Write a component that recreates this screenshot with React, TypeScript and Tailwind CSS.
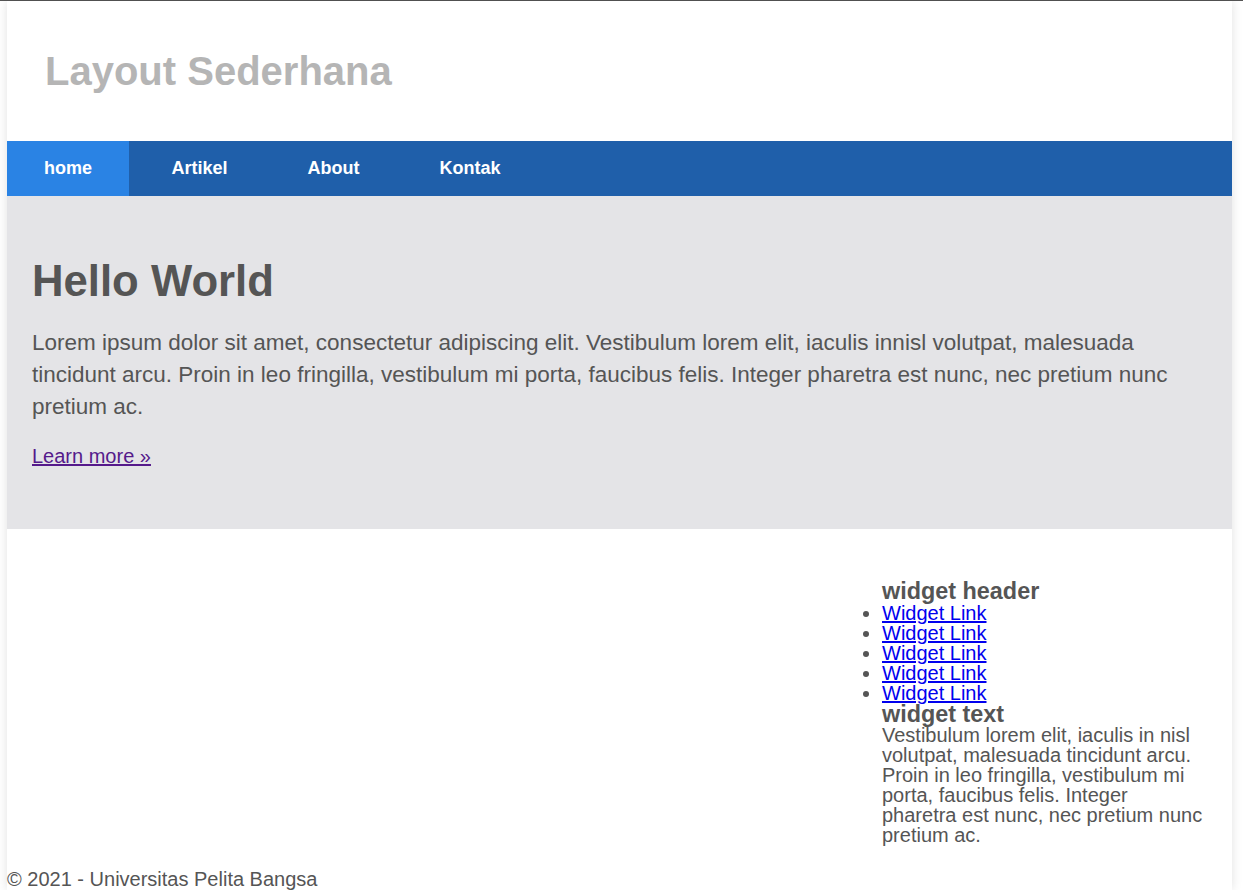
const navItems = ["home", "Artikel", "About", "Kontak"];

const App = () => {
  return (
    <div className="min-h-[890px] border-t border-[#555] bg-white font-['Liberation_Sans',Arial,sans-serif] text-[#555]">
      <div className="ml-[7px] flex min-h-[889px] w-[1225px] flex-col bg-white shadow-[0_0_10px_rgba(0,0,0,0.12)]">
        <header className="flex h-[140px] items-center pl-[38px]">
          <h1 className="text-[40px] font-bold leading-none text-[#b5b5b5]">Layout Sederhana</h1>
        </header>

        <nav className="flex h-[55px] gap-[5px] bg-[#1f5faa]">
          {navItems.map((item, index) => (
            <a
              key={item}
              href="#"
              className={
                index === 0
                  ? "flex items-center bg-[#2a83e4] px-[37px] text-[18px] font-bold text-white"
                  : "flex items-center px-[37.5px] text-[18px] font-bold text-white"
              }
            >
              {item}
            </a>
          ))}
        </nav>

        <section className="bg-[#e4e4e7] px-[25px] pt-[60px] pb-[57px]">
          <h2 className="text-[43.7px] font-bold leading-[49px] text-[#555]">Hello World</h2>
          <p className="mt-[22px] text-[22.5px] leading-[32px]">
            Lorem ipsum dolor sit amet, consectetur adipiscing elit. Vestibulum lorem elit, iaculis innisl volutpat,
            malesuada tincidunt arcu. Proin in leo fringilla, vestibulum mi porta, faucibus felis. Integer pharetra est
            nunc, nec pretium nunc pretium ac.
          </p>
          <p className="mt-[17px] text-[20px] leading-[32px]">
            <a href="#" className="text-[#551a8b] underline">
              Learn more »
            </a>
          </p>
        </section>

        <div className="flex pt-[51px]">
          <div className="flex-1" />
          <aside className="mr-[26px] w-[324px] text-[20px] leading-[20px]">
            <h3 className="text-[23.4px] font-bold leading-[23.4px]">widget header</h3>
            <ul className="list-disc">
              {[1, 2, 3, 4, 5].map((n) => (
                <li key={n}>
                  <a href="#" className="text-[#0000ee] underline">
                    Widget Link
                  </a>
                </li>
              ))}
            </ul>
            <h3 className="text-[23.4px] font-bold leading-[22px]">widget text</h3>
            <p>
              Vestibulum lorem elit, iaculis in nisl volutpat, malesuada tincidunt arcu. Proin in leo fringilla,
              vestibulum mi porta, faucibus felis. Integer pharetra est nunc, nec pretium nunc pretium ac.
            </p>
          </aside>
        </div>

        <footer className="mt-[24px] text-[20px] leading-[20px]">© 2021 - Universitas Pelita Bangsa</footer>
      </div>
    </div>
  );
};

export default App;
